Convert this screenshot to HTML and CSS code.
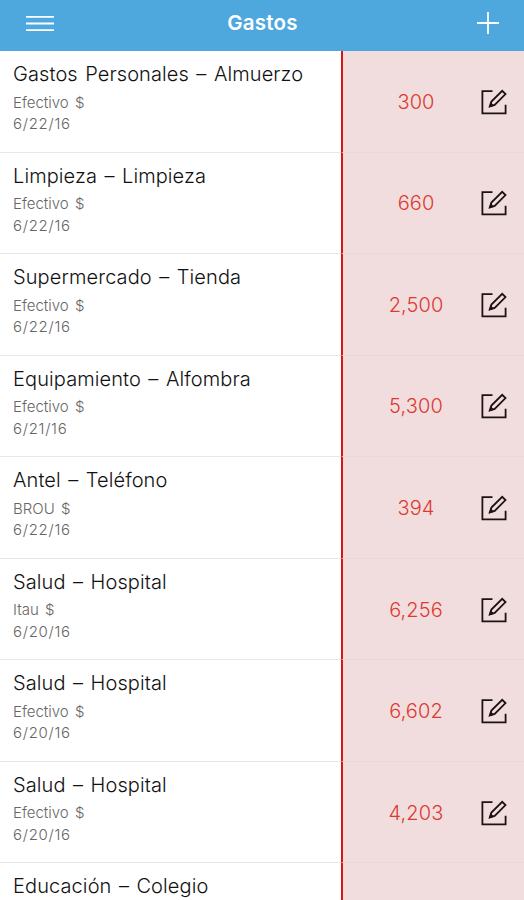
FILE: index.html
```
<!DOCTYPE html>
<html lang="es">
<head>
<meta charset="utf-8">
<title>Gastos</title>
<link rel="stylesheet" href="styles.css">
</head>
<body>
<svg class="sprite">
	<symbol id="edit" viewBox="0 0 28 28">
		<path d="M12.5 3.1H2.4v22.2h23.2v-8.5"/>
		<path d="M9.8 18.4l1.6-4.8L22.2 2.8l3.3 3.3-10.8 10.8z"/>
		<path class="tip" d="M9 19.4l1.6-5.2 3.6 3.6z"/>
	</symbol>
</svg>
<div class="header">
	<svg class="menu" viewBox="0 0 28 17"><path d="M0 1.8h28M0 8.5h28M0 15.2h28"/></svg>
	<h1>Gastos</h1>
	<svg class="add" viewBox="0 0 24 24"><path d="M12 1v22M1 12h22"/></svg>
</div>
<ul class="list">
	<li>
		<div class="info">
			<h2>Gastos Personales – Almuerzo</h2>
			<p>Efectivo $</p>
			<p class="date">6/22/16</p>
		</div>
		<div class="amount"><span>300</span><svg><use href="#edit"/></svg></div>
	</li>
	<li>
		<div class="info">
			<h2>Limpieza – Limpieza</h2>
			<p>Efectivo $</p>
			<p class="date">6/22/16</p>
		</div>
		<div class="amount"><span>660</span><svg><use href="#edit"/></svg></div>
	</li>
	<li>
		<div class="info">
			<h2>Supermercado – Tienda</h2>
			<p>Efectivo $</p>
			<p class="date">6/22/16</p>
		</div>
		<div class="amount"><span>2,500</span><svg><use href="#edit"/></svg></div>
	</li>
	<li>
		<div class="info">
			<h2>Equipamiento – Alfombra</h2>
			<p>Efectivo $</p>
			<p class="date">6/21/16</p>
		</div>
		<div class="amount"><span>5,300</span><svg><use href="#edit"/></svg></div>
	</li>
	<li>
		<div class="info">
			<h2>Antel – Teléfono</h2>
			<p>BROU $</p>
			<p class="date">6/22/16</p>
		</div>
		<div class="amount"><span>394</span><svg><use href="#edit"/></svg></div>
	</li>
	<li>
		<div class="info">
			<h2>Salud – Hospital</h2>
			<p>Itau $</p>
			<p class="date">6/20/16</p>
		</div>
		<div class="amount"><span>6,256</span><svg><use href="#edit"/></svg></div>
	</li>
	<li>
		<div class="info">
			<h2>Salud – Hospital</h2>
			<p>Efectivo $</p>
			<p class="date">6/20/16</p>
		</div>
		<div class="amount"><span>6,602</span><svg><use href="#edit"/></svg></div>
	</li>
	<li>
		<div class="info">
			<h2>Salud – Hospital</h2>
			<p>Efectivo $</p>
			<p class="date">6/20/16</p>
		</div>
		<div class="amount"><span>4,203</span><svg><use href="#edit"/></svg></div>
	</li>
	<li>
		<div class="info">
			<h2>Educación – Colegio</h2>
		</div>
		<div class="amount"></div>
	</li>
</ul>
</body>
</html>
```
FILE: styles.css
```
*{
	padding: 0;
	margin: 0;
	box-sizing: border-box;
}
body{
	height: 900px;
	overflow: hidden;
	display: flex;
	flex-direction: column;
	background: #fff;
	font-family: Inter, "Liberation Sans", sans-serif;
}
ul,li{
	list-style: none;
}
svg{
	fill: none;
}
.sprite{
	display: none;
}
.header{
	flex: none;
	display: flex;
	justify-content: space-between;
	align-items: center;
	height: 51px;
	padding: 0 24px 5px 26px;
	background: #4fa8dd;
	color: #fff;
}
.header svg{
	stroke: #fff;
	stroke-width: 1.8;
}
.header h1{
	margin-right: 5px;
	font-size: 20.5px;
	font-weight: 600;
	line-height: 24px;
	letter-spacing: .2px;
}
.header .menu{
	width: 28px;
	height: 17px;
}
.header .add{
	width: 24px;
	height: 24px;
}
.list{
	flex: 1;
	min-height: 0;
	overflow: hidden;
}
.list li{
	display: flex;
	height: 101.55px;
	border-bottom: 1px solid #e8e8e8;
}
.info{
	flex: 1;
	padding: 10px 0 0 13px;
}
.info h2{
	font-size: 20px;
	font-weight: 300;
	line-height: 26px;
	letter-spacing: .1px;
	word-spacing: 1.7px;
	color: #111;
}
.info p{
	font-size: 15px;
	font-weight: 300;
	line-height: 21.5px;
	word-spacing: 2px;
	color: #666;
}
.info .date{
	letter-spacing: .7px;
}
.info h2 + p{
	margin-top: 4.5px;
}
.amount{
	display: flex;
	align-items: center;
	width: 183px;
	height: 101.55px;
	padding-top: 1px;
	border-left: 2px solid #d81512;
	border-bottom: 1px solid #ead7d7;
	background: #f1dddd;
}
.amount span{
	width: 146px;
	text-align: center;
	font-size: 20px;
	font-weight: 300;
	letter-spacing: .1px;
	color: #dc3a30;
}
.amount svg{
	width: 28px;
	height: 28px;
	margin-left: -9px;
	stroke: #1c1214;
	stroke-width: 1.8;
}
.amount svg .tip,
.tip{
	fill: #1c1214;
	stroke: none;
}
```
